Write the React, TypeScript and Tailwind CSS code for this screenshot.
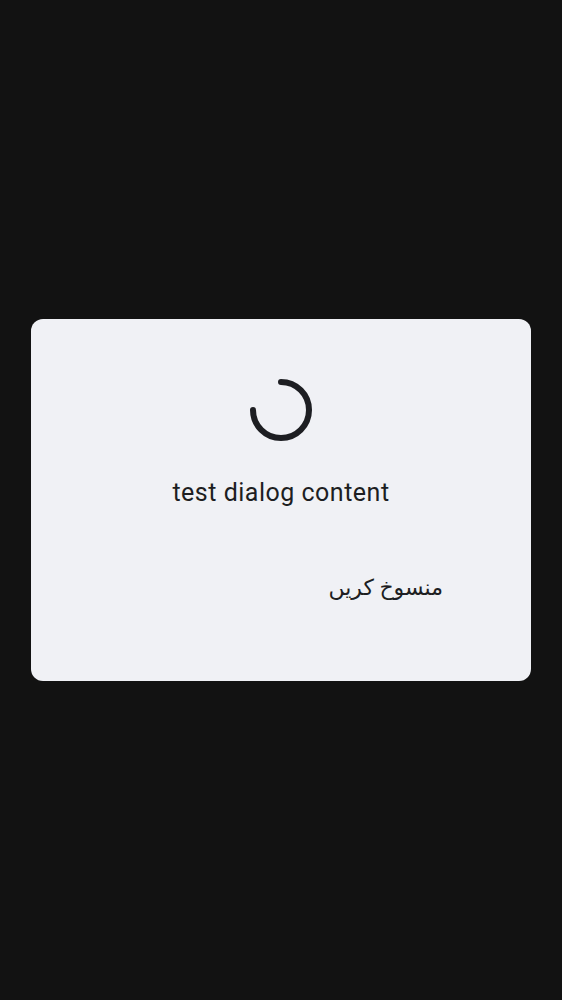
export default function App() {
  return (
    <div className="min-h-screen w-full bg-[#121212] flex items-center justify-center px-[31px]" style={{ fontFamily: "Roboto, 'DejaVu Sans', sans-serif" }}>
      <div className="w-full h-[362px] rounded-[12px] bg-[#f0f1f5] flex flex-col items-center pt-[58px]">
        <svg width="66" height="66" viewBox="0 0 66 66" className="text-[#1d1e22]">
          <path
            d="M33 5 A28 28 0 1 1 5 33"
            fill="none"
            stroke="currentColor"
            strokeWidth="6"
            strokeLinecap="round"
          />
        </svg>
        <p className="mt-[34px] text-[25px] leading-[32px] tracking-[0.5px] text-[#1d1e22]">test dialog content</p>
        <div className="w-full flex justify-end pr-[88px] mt-[65px]">
          <button dir="rtl" className="text-[22px] leading-[28px] text-[#1d1e22]">منسوخ کریں</button>
        </div>
      </div>
    </div>
  );
}
